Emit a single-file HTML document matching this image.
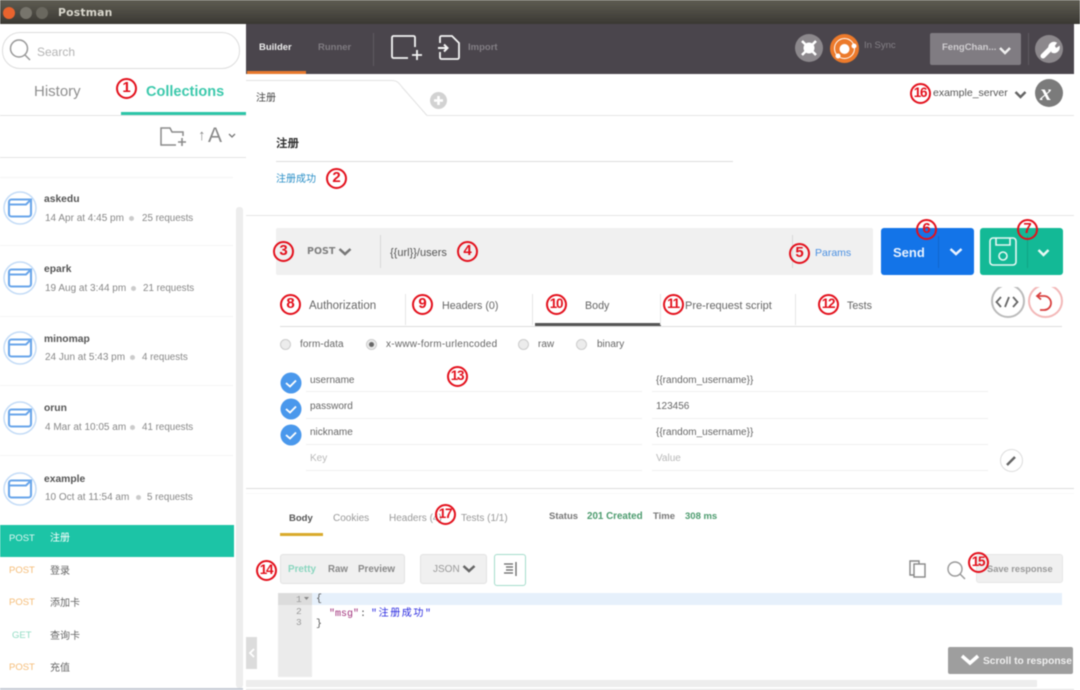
<!DOCTYPE html>
<html><head><meta charset="utf-8"><title>Postman</title>
<style>
html,body{margin:0;padding:0;background:#fff}
#r{position:relative;width:1080px;height:690px;overflow:hidden;background:#fff;font-family:"Liberation Sans","Noto Sans CJK SC",sans-serif;filter:blur(.5px)}
#r div,#r span.t{position:absolute}
.t{white-space:nowrap;line-height:14px;color:#666;font-size:11px;transform:translateY(-6px)}
.b{font-weight:bold}
.n{box-sizing:border-box;width:21px;height:21px;border:2.5px solid #e3101c;border-radius:50%;color:#e3101c;font:bold 15px/16px "Liberation Sans",sans-serif;text-align:center;background:transparent;z-index:5}
.d{font-size:13.500px;letter-spacing:-1.200px;text-indent:-1px}
.ln{background:#e6e6e6;height:1px}
svg{position:absolute;overflow:visible}
</style></head><body><div id="r">

<!-- title bar -->
<div style="left:0;top:0;width:1080px;height:23.500px;background:linear-gradient(#5e5c52,#3a3833)"></div>
<div style="left:3px;top:7px;width:12px;height:12px;border-radius:50%;background:#e8632e"></div>
<div style="left:20px;top:7px;width:12px;height:12px;border-radius:50%;background:#77756c"></div>
<div style="left:36px;top:7px;width:12px;height:12px;border-radius:50%;background:#6a685f"></div>
<span class="t b" style="left:58px;top:12px;color:#d8d6cc;font:bold 10.800px/14px 'DejaVu Sans',sans-serif;letter-spacing:.2px">Postman</span>

<!-- top bar -->
<div style="left:246px;top:23.500px;width:828px;height:50.500px;background:#4a454c"></div>
<div style="left:247px;top:71px;width:59px;height:3px;background:#e8792d"></div>
<span class="t b" style="left:259px;top:47px;color:#ececec;font-size:9.500px">Builder</span>
<span class="t b" style="left:318px;top:47px;color:#7f7b81;font-size:9.500px">Runner</span>
<div style="left:373px;top:33px;width:1px;height:33px;background:#5e5a60"></div>
<svg style="left:390px;top:34px" width="36" height="28" fill="none" stroke="#f4f4f4" stroke-width="1.800"><path d="M25 13V3.500A1.500 1.500 0 0 0 23.500 2H3.500A1.500 1.500 0 0 0 2 3.500V22.500A1.500 1.500 0 0 0 3.500 24H18"/><path d="M27 16v10M22 21h10"/></svg>
<svg style="left:436px;top:34px" width="26" height="28" fill="none" stroke="#f4f4f4" stroke-width="1.800"><path d="M4 9V3.500A1.500 1.500 0 0 1 5.500 2H16L23 9V23.500A1.500 1.500 0 0 1 21.500 25H5.500A1.500 1.500 0 0 1 4 23.500V18"/><path d="M2 14H11M8 10.500l3.500 3.500-3.500 3.500" stroke-width="2"/></svg>
<span class="t b" style="left:468px;top:47px;color:#827e84;font-size:9.500px">Import</span>

<div style="left:795px;top:34px;width:28px;height:28px;border-radius:50%;background:#8c888c"></div>
<svg style="left:795px;top:34px" width="28" height="28" fill="none" stroke="#fff"><circle cx="14" cy="14" r="5" fill="#fff"/><path d="M7 7l4 4M21 7l-4 4M7 21l4-4M21 21l-4-4" stroke-width="2.500"/></svg>
<div style="left:830px;top:34px;width:29px;height:29px;border-radius:50%;background:#ec7a2b"></div>
<svg style="left:830px;top:34px" width="29" height="29" fill="none" stroke="#fff"><circle cx="14.500" cy="14.500" r="10" stroke-width="1"/><circle cx="14.500" cy="15" r="4.500" fill="#fff"/><circle cx="24" cy="12" r="2" fill="#fff"/><circle cx="8" cy="22" r="2" fill="#fff"/></svg>
<span class="t" style="left:864px;top:45px;color:#848086;font-size:9.500px">In Sync</span>
<div style="left:930px;top:33px;width:91px;height:32px;background:#807c82;border-radius:2px"></div>
<span class="t b" style="left:942px;top:47px;color:#cfcdd0;font-size:9.500px">FengChan...</span>
<svg style="left:998px;top:46px" width="14" height="10" fill="none" stroke="#eee" stroke-width="2.500"><path d="M2 2l5 5 5-5"/></svg>
<div style="left:1028px;top:33px;width:1px;height:32px;background:#5e5a60"></div>
<div style="left:1035px;top:35px;width:28px;height:28px;border-radius:50%;background:#8c888c"></div>
<svg style="left:1035px;top:35px" width="28" height="28" fill="none" stroke="#fff" stroke-linecap="round"><path d="M8 21l7-7" stroke-width="5"/><path d="M14 13a5 5 0 0 1 7-5l-2 3 2 3 3-2a5 5 0 0 1-7 5" fill="#fff" stroke-width="1.500"/></svg>

<!-- sidebar -->
<div style="left:2px;top:32px;width:236px;height:35px;border:1px solid #ddd;border-radius:18px"></div>
<svg style="left:8px;top:38px" width="24" height="25" fill="none" stroke="#999" stroke-width="1.500"><circle cx="11" cy="10.500" r="8.500"/><path d="M17 17l5 5"/></svg>
<span class="t" style="left:37px;top:51px;color:#b4b4b4;font-size:12px">Search</span>
<span class="t" style="left:34px;top:91px;color:#8f8f8f;font-size:15px">History</span>
<span class="t b" style="left:146px;top:91px;color:#3cc9ac;font-size:14.500px">Collections</span>
<div style="left:0;top:115px;width:246px;height:1px;background:#e4e4e4"></div>
<div style="left:121px;top:112px;width:125px;height:3px;background:#2cc5a8"></div>
<svg style="left:160px;top:127px" width="28" height="20" fill="none" stroke="#8a8a8a" stroke-width="1.500"><path d="M23 9V5H12L10 1H1V18H16"/><path d="M22 11v8M18 15h8" stroke-width="1.600"/></svg>
<span class="t" style="left:198px;top:135px;color:#8a8a8a;font-size:15px">↑</span>
<span class="t" style="left:208px;top:135px;color:#888;font-size:21px">A</span>
<svg style="left:228px;top:133px" width="8" height="6" fill="none" stroke="#777" stroke-width="1.300"><path d="M1 1l3 3 3-3"/></svg>
<div style="left:0;top:157px;width:246px;height:1px;background:#e4e4e4"></div>
<div style="left:0;top:177px;width:233px;height:1px;background:#f4f4f4"></div>
<div style="left:0;top:245px;width:233px;height:1px;background:#f5f5f5"></div>
<div style="left:0;top:316px;width:233px;height:1px;background:#f5f5f5"></div>
<div style="left:0;top:385px;width:233px;height:1px;background:#f5f5f5"></div>
<div style="left:0;top:455px;width:233px;height:1px;background:#f5f5f5"></div>
<div style="left:236px;top:207px;width:7px;height:481px;background:#ededed;border-radius:3px"></div>

<svg style="left:3px;top:191px" width="34" height="34" fill="none" stroke="#6aa6ea"><circle cx="17" cy="17" r="16" stroke="#c4dcf7" stroke-width="1.500"/><path d="M6 23V11a2.500 2.500 0 0 1 2.500-2.500H28V23a2.500 2.500 0 0 1-2.500 2.500h-17A2.500 2.500 0 0 1 6 23ZM6 13.500H23L28 8.500" stroke-width="2.100"/></svg>
<span class="t b" style="left:44px;top:199px;color:#555;font-size:10.300px">askedu</span>
<span class="t" style="left:45px;top:218px;color:#888;font-size:10px">14 Apr at 4:45 pm</span>
<div style="left:129px;top:216px;width:5px;height:5px;border-radius:50%;background:#ccc"></div>
<span class="t" style="left:142px;top:218px;color:#888;font-size:9.800px">25 requests</span>

<svg style="left:3px;top:261px" width="34" height="34" fill="none" stroke="#6aa6ea"><circle cx="17" cy="17" r="16" stroke="#c4dcf7" stroke-width="1.500"/><path d="M6 23V11a2.500 2.500 0 0 1 2.500-2.500H28V23a2.500 2.500 0 0 1-2.500 2.500h-17A2.500 2.500 0 0 1 6 23ZM6 13.500H23L28 8.500" stroke-width="2.100"/></svg>
<span class="t b" style="left:44px;top:269px;color:#555;font-size:10.300px">epark</span>
<span class="t" style="left:45px;top:288px;color:#888;font-size:10px">19 Aug at 3:44 pm</span>
<div style="left:131px;top:286px;width:5px;height:5px;border-radius:50%;background:#ccc"></div>
<span class="t" style="left:143px;top:288px;color:#888;font-size:9.800px">21 requests</span>

<svg style="left:3px;top:331px" width="34" height="34" fill="none" stroke="#6aa6ea"><circle cx="17" cy="17" r="16" stroke="#c4dcf7" stroke-width="1.500"/><path d="M6 23V11a2.500 2.500 0 0 1 2.500-2.500H28V23a2.500 2.500 0 0 1-2.500 2.500h-17A2.500 2.500 0 0 1 6 23ZM6 13.500H23L28 8.500" stroke-width="2.100"/></svg>
<span class="t b" style="left:44px;top:339px;color:#555;font-size:10.300px">minomap</span>
<span class="t" style="left:45px;top:357px;color:#888;font-size:10px">24 Jun at 5:43 pm</span>
<div style="left:130px;top:355px;width:5px;height:5px;border-radius:50%;background:#ccc"></div>
<span class="t" style="left:142px;top:357px;color:#888;font-size:9.800px">4 requests</span>

<svg style="left:3px;top:401px" width="34" height="34" fill="none" stroke="#6aa6ea"><circle cx="17" cy="17" r="16" stroke="#c4dcf7" stroke-width="1.500"/><path d="M6 23V11a2.500 2.500 0 0 1 2.500-2.500H28V23a2.500 2.500 0 0 1-2.500 2.500h-17A2.500 2.500 0 0 1 6 23ZM6 13.500H23L28 8.500" stroke-width="2.100"/></svg>
<span class="t b" style="left:44px;top:408px;color:#555;font-size:10.300px">orun</span>
<span class="t" style="left:45px;top:427px;color:#888;font-size:10px">4 Mar at 10:05 am</span>
<div style="left:130px;top:425px;width:5px;height:5px;border-radius:50%;background:#ccc"></div>
<span class="t" style="left:142px;top:427px;color:#888;font-size:9.800px">41 requests</span>

<svg style="left:3px;top:472px" width="34" height="34" fill="none" stroke="#6aa6ea"><circle cx="17" cy="17" r="16" stroke="#c4dcf7" stroke-width="1.500"/><path d="M6 23V11a2.500 2.500 0 0 1 2.500-2.500H28V23a2.500 2.500 0 0 1-2.500 2.500h-17A2.500 2.500 0 0 1 6 23ZM6 13.500H23L28 8.500" stroke-width="2.100"/></svg>
<span class="t b" style="left:44px;top:479px;color:#555;font-size:10.300px">example</span>
<span class="t" style="left:45px;top:497px;color:#888;font-size:10px">10 Oct at 11:54 am</span>
<div style="left:136px;top:495px;width:5px;height:5px;border-radius:50%;background:#ccc"></div>
<span class="t" style="left:147px;top:497px;color:#888;font-size:9.800px">5 requests</span>

<div style="left:0;top:525px;width:234px;height:32px;background:#1cc4a6"></div>
<span class="t" style="left:9px;top:538px;color:#dff7f1;font-size:9.500px">POST</span>
<span class="t" style="left:50px;top:538px;color:#fff;font-size:10px">注册</span>
<span class="t" style="left:9px;top:570px;color:#f5bc76;font-size:9.500px">POST</span>
<span class="t" style="left:50px;top:571px;color:#666;font-size:10px">登录</span>
<span class="t" style="left:9px;top:602px;color:#f5bc76;font-size:9.500px">POST</span>
<span class="t" style="left:50px;top:603px;color:#666;font-size:10px">添加卡</span>
<span class="t" style="left:12px;top:635px;color:#92dcc4;font-size:9.500px">GET</span>
<span class="t" style="left:50px;top:636px;color:#666;font-size:10px">查询卡</span>
<span class="t" style="left:9px;top:667px;color:#f5bc76;font-size:9.500px">POST</span>
<span class="t" style="left:50px;top:668px;color:#666;font-size:10px">充值</span>
<div style="left:0;top:688px;width:243px;height:2px;background:#c6ccd6"></div>

<!-- tab bar -->
<div class="ln" style="left:427px;top:115px;width:647px"></div>
<svg style="left:246px;top:80px" width="182" height="36" fill="none" stroke="#e2e2e2"><path d="M0 .5H146C151 .5 153 3 156 7L181 35.500"/></svg>
<span class="t" style="left:256px;top:98px;color:#444;font-size:10px">注册</span>
<div style="left:430px;top:92px;width:17px;height:17px;border-radius:50%;background:#d2d2d2"></div>
<svg style="left:430px;top:92px" width="17" height="17" stroke="#fff" stroke-width="2.500"><path d="M8.500 4v9M4 8.500h9"/></svg>
<span class="t" style="left:933px;top:92px;color:#555;font-size:10.500px">example_server</span>
<svg style="left:1014px;top:90px" width="14" height="10" fill="none" stroke="#666" stroke-width="2.500"><path d="M1.500 2l5 5 5-5"/></svg>
<div style="left:1035px;top:79px;width:28px;height:28px;border-radius:50%;background:#7b7b7b"></div>
<span class="t b" style="left:1040px;top:92px;color:#fff;font:italic bold 23px/14px 'Liberation Serif',serif">x</span>

<span class="t b" style="left:276px;top:143px;color:#333;font-size:11.500px">注册</span>
<div class="ln" style="left:276px;top:161px;width:457px;background:#ddd"></div>
<span class="t" style="left:276px;top:179px;color:#2a8fc7;font-size:10px">注册成功</span>
<div class="ln" style="left:246px;top:215px;width:828px"></div>

<!-- url bar -->
<div style="left:276px;top:228px;width:597px;height:47px;background:#f0f0f0;border-radius:2px"></div>
<span class="t b" style="left:307px;top:251px;color:#808080;font:bold 9.500px/14px 'DejaVu Sans',sans-serif">POST</span>
<svg style="left:338px;top:247px" width="14" height="10" fill="none" stroke="#777" stroke-width="2.500"><path d="M1.500 2l5.500 5 5.500-5"/></svg>
<div style="left:380px;top:235px;width:1px;height:33px;background:#d8d8d8"></div>
<span class="t" style="left:390px;top:252px;color:#555;font-size:11px">{{url}}/users</span>
<div style="left:792px;top:235px;width:1px;height:33px;background:#d8d8d8"></div>
<span class="t" style="left:815px;top:252px;color:#4a90e2;font-size:10.500px">Params</span>

<div style="left:881px;top:228px;width:93px;height:47px;background:#1374e8;border-radius:3px"></div>
<div style="left:938px;top:236px;width:1px;height:32px;background:#1266cc"></div>
<span class="t b" style="left:893px;top:252px;color:#e8f2ff;font-size:13px">Send</span>
<svg style="left:949px;top:247px" width="14" height="10" fill="none" stroke="#e8f2ff" stroke-width="2.500"><path d="M1.500 2l5.500 5 5.500-5"/></svg>
<div style="left:980px;top:228px;width:83px;height:47px;background:#13b996;border-radius:3px"></div>
<div style="left:1027px;top:236px;width:1px;height:32px;background:#10a585"></div>
<svg style="left:989px;top:237px" width="30" height="30" fill="none" stroke="#e6f8f3" stroke-width="1.600"><rect x="1" y="1" width="26" height="27" rx="3"/><path d="M7 1v7h14V1"/><circle cx="14" cy="19" r="4"/></svg>
<svg style="left:1037px;top:248px" width="14" height="10" fill="none" stroke="#e6f8f3" stroke-width="2.500"><path d="M1.500 2l5 5 5-5"/></svg>

<!-- req tabs -->
<div class="ln" style="left:280px;top:326px;width:782px;height:1px;background:#ddd"></div>
<span class="t" style="left:309px;top:305px;color:#666;font-size:11.500px">Authorization</span>
<div class="ln" style="left:405px;top:294px;width:1px;height:31px"></div>
<span class="t" style="left:442px;top:305px;color:#666;font-size:10.700px">Headers (0)</span>
<div class="ln" style="left:532px;top:294px;width:1px;height:31px"></div>
<span class="t" style="left:585px;top:305px;color:#666;font-size:10.700px">Body</span>
<div style="left:535px;top:323px;width:126px;height:3px;background:#555"></div>
<div class="ln" style="left:660px;top:294px;width:1px;height:31px"></div>
<span class="t" style="left:685px;top:305px;color:#666;font-size:11px">Pre-request script</span>
<div class="ln" style="left:795px;top:294px;width:1px;height:31px"></div>
<span class="t" style="left:847px;top:305px;color:#666;font-size:10.700px">Tests</span>
<div style="left:991px;top:284px;width:30px;height:30px;border:2px solid #bbb;border-radius:50%;clip-path:inset(3px 0 0 0)"></div>
<svg style="left:995px;top:295px" width="24" height="14" fill="none" stroke="#666" stroke-width="1.800"><path d="M6 2L1.500 7 6 12M18 2l4.500 5L18 12M14 2l-4 10"/></svg>
<div style="left:1028px;top:284px;width:31px;height:30px;border:2px solid #f3b8b8;border-radius:50%;clip-path:inset(3px 0 0 0)"></div>
<svg style="left:1034px;top:292px" width="22" height="20" fill="none" stroke="#d9403f" stroke-width="1.800"><path d="M4 4h6.500a7 7 0 1 1-1 14H6"/><path d="M7 0.500L3 4l4 3.500"/></svg>

<!-- radios -->
<div style="left:280px;top:339px;width:9px;height:9px;border:1px solid #ccc;border-radius:50%;background:#ececec"></div>
<span class="t" style="left:300px;top:344px;color:#666;font-size:10px;letter-spacing:.1px">form-data</span>
<div style="left:366px;top:339px;width:9px;height:9px;border:1px solid #ccc;border-radius:50%;background:radial-gradient(#666 0 2px,#ececec 3px)"></div>
<span class="t" style="left:386px;top:344px;color:#666;font-size:10px;letter-spacing:.25px">x-www-form-urlencoded</span>
<div style="left:518px;top:339px;width:9px;height:9px;border:1px solid #ccc;border-radius:50%;background:#ececec"></div>
<span class="t" style="left:538px;top:344px;color:#666;font-size:10px">raw</span>
<div style="left:576px;top:339px;width:9px;height:9px;border:1px solid #ccc;border-radius:50%;background:#ececec"></div>
<span class="t" style="left:597px;top:344px;color:#666;font-size:10px">binary</span>

<!-- form rows -->
<svg style="left:280px;top:372px" width="22" height="22"><circle cx="11" cy="11" r="10.500" fill="#4a98ec"/><path d="M6 11l4 3.500 6-6" fill="none" stroke="#fff" stroke-width="1.800"/></svg>
<svg style="left:280px;top:398px" width="22" height="22"><circle cx="11" cy="11" r="10.500" fill="#4a98ec"/><path d="M6 11l4 3.500 6-6" fill="none" stroke="#fff" stroke-width="1.800"/></svg>
<svg style="left:280px;top:424px" width="22" height="22"><circle cx="11" cy="11" r="10.500" fill="#4a98ec"/><path d="M6 11l4 3.500 6-6" fill="none" stroke="#fff" stroke-width="1.800"/></svg>
<span class="t" style="left:310px;top:380px;color:#666;font-size:10px">username</span>
<span class="t" style="left:310px;top:406px;color:#666;font-size:10px">password</span>
<span class="t" style="left:310px;top:432px;color:#666;font-size:10px">nickname</span>
<span class="t" style="left:310px;top:458px;color:#b8b8b8;font-size:10px">Key</span>
<span class="t" style="left:656px;top:380px;color:#666;font-size:10px">{{random_username}}</span>
<span class="t" style="left:656px;top:406px;color:#666;font-size:10px">123456</span>
<span class="t" style="left:656px;top:432px;color:#666;font-size:10px">{{random_username}}</span>
<span class="t" style="left:656px;top:458px;color:#b8b8b8;font-size:10px">Value</span>
<div class="ln" style="left:306px;top:391px;width:336px;background:#f0f0f0"></div>
<div class="ln" style="left:306px;top:418px;width:336px;background:#f0f0f0"></div>
<div class="ln" style="left:306px;top:444px;width:336px;background:#f0f0f0"></div>
<div class="ln" style="left:306px;top:470px;width:336px;background:#f0f0f0"></div>
<div class="ln" style="left:652px;top:391px;width:336px;background:#f0f0f0"></div>
<div class="ln" style="left:652px;top:418px;width:336px;background:#f0f0f0"></div>
<div class="ln" style="left:652px;top:444px;width:336px;background:#f0f0f0"></div>
<div class="ln" style="left:652px;top:470px;width:336px;background:#f0f0f0"></div>
<div style="left:1000px;top:449px;width:21px;height:21px;border:1px solid #ddd;border-radius:50%"></div>
<svg style="left:1000px;top:449px" width="23" height="23" fill="none" stroke="#666" stroke-width="2.500"><path d="M7 16l8-8"/></svg>
<div class="ln" style="left:246px;top:488px;width:828px;background:#ddd"></div>
<div class="ln" style="left:246px;top:493px;width:828px;background:#f8f8f8"></div>

<!-- response -->
<span class="t b" style="left:289px;top:518px;color:#555;font-size:9.500px">Body</span>
<span class="t" style="left:333px;top:518px;color:#999;font-size:10px">Cookies</span>
<span class="t" style="left:389px;top:518px;color:#999;font-size:10px">Headers (4)</span>
<span class="t" style="left:461px;top:518px;color:#999;font-size:10px">Tests (1/1)</span>
<div style="left:280px;top:533px;width:43px;height:3px;background:#d9aa2c"></div>
<span class="t b" style="left:549px;top:516px;color:#777;font-size:9.500px">Status</span>
<span class="t b" style="left:587px;top:516px;color:#4c9b6e;font-size:9.800px">201 Created</span>
<span class="t b" style="left:653px;top:516px;color:#777;font-size:9.500px">Time</span>
<span class="t b" style="left:685px;top:516px;color:#4c9b6e;font-size:9.500px">308 ms</span>

<div style="left:280px;top:554px;width:123px;height:28px;background:#f0f0f0;border:1px solid #e2e2e2;border-radius:3px"></div>
<span class="t b" style="left:288px;top:569px;color:#8ad6bf;font-size:9.900px">Pretty</span>
<span class="t b" style="left:328px;top:569px;color:#888;font-size:9.700px">Raw</span>
<span class="t b" style="left:358px;top:569px;color:#888;font-size:9.800px">Preview</span>
<div style="left:420px;top:554px;width:65px;height:28px;background:#f0f0f0;border:1px solid #e2e2e2;border-radius:3px"></div>
<span class="t" style="left:433px;top:569px;color:#999;font-size:10px">JSON</span>
<svg style="left:462px;top:564px" width="14" height="10" fill="none" stroke="#666" stroke-width="2.500"><path d="M1.500 2l5.500 5 5.500-5"/></svg>
<div style="left:494px;top:554px;width:30px;height:30px;border:1px solid #a4dccb;border-radius:3px"></div>
<svg style="left:503px;top:561px" width="15" height="16" fill="none" stroke="#666" stroke-width="1.300"><path d="M1 3h9M3 6h7M3 9h7M1 12h9M13 1v14"/></svg>
<svg style="left:909px;top:560px" width="18" height="18" fill="none" stroke="#888" stroke-width="1.400"><path d="M5 15H1V1h9v3"/><rect x="5" y="4" width="11" height="13"/></svg>
<svg style="left:946px;top:560px" width="20" height="20" fill="none" stroke="#999" stroke-width="1.400"><circle cx="9" cy="9" r="7"/><path d="M14 14l5 5"/></svg>
<div style="left:976px;top:554px;width:85px;height:27px;background:#f0f0f0;border:1px solid #e6e6e6;border-radius:3px"></div>
<span class="t b" style="left:987px;top:568px;color:#999;font-size:9.300px">Save response</span>

<!-- editor -->
<div style="left:278px;top:593px;width:34px;height:84px;background:#ebebeb"></div>
<div style="left:278px;top:593px;width:34px;height:12px;background:#dcdcdc"></div>
<div style="left:312px;top:593px;width:750px;height:12px;background:#e6f0fb"></div>
<span class="t" style="left:296px;top:599px;color:#999;font:9.500px/14px 'Liberation Mono',monospace">1</span>
<svg style="left:304px;top:597px" width="6" height="4"><path d="M0 0h5L2.500 3z" fill="#888"/></svg>
<span class="t" style="left:296px;top:611px;color:#999;font:9.500px/14px 'Liberation Mono',monospace">2</span>
<span class="t" style="left:296px;top:622px;color:#999;font:9.500px/14px 'Liberation Mono',monospace">3</span>
<span class="t" style="left:316px;top:599px;color:#555;font:10px/14px 'Liberation Mono',monospace">{</span>
<span class="t" style="left:329px;top:614px;color:#a0307a;font:10px/14px 'Liberation Mono',monospace">"msg"</span>
<span class="t" style="left:360px;top:614px;color:#555;font:10px/14px 'Liberation Mono',monospace">:</span>
<span class="t" style="left:371px;top:614px;color:#2a2ae0;font:10px/14px 'Liberation Mono','Noto Sans CJK SC',monospace;letter-spacing:1.600px">"注册成功"</span>
<span class="t" style="left:316px;top:624px;color:#555;font:10px/14px 'Liberation Mono',monospace">}</span>

<div style="left:246px;top:637px;width:11px;height:32px;background:#dcdcdc"></div>
<svg style="left:249px;top:648px" width="6" height="10" fill="none" stroke="#fff" stroke-width="1.800"><path d="M5 1L1 5l4 4"/></svg>
<div style="left:948px;top:647px;width:125px;height:27px;background:#9e9e9e;border-radius:2px"></div>
<svg style="left:960px;top:654px" width="20" height="13" fill="none" stroke="#fff" stroke-width="3.500"><path d="M2 2l8 7 8-7"/></svg>
<span class="t b" style="left:983px;top:661px;color:#eee;font-size:10.200px">Scroll to response</span>
<div style="left:246px;top:680px;width:791px;height:7px;background:#ededed"></div>
<div style="left:246px;top:689px;width:828px;height:1px;background:#e0e0e0"></div>

<!-- numbered badges -->
<div class="n" style="left:116px;top:78px">1</div>
<div class="n" style="left:326px;top:168px">2</div>
<div class="n" style="left:273px;top:241px">3</div>
<div class="n" style="left:457px;top:241px">4</div>
<div class="n" style="left:789px;top:243px">5</div>
<div class="n" style="left:916px;top:219px">6</div>
<div class="n" style="left:1017px;top:219px">7</div>
<div class="n" style="left:280px;top:294px">8</div>
<div class="n" style="left:412px;top:294px">9</div>
<div class="n d" style="left:546px;top:294px">10</div>
<div class="n d" style="left:663px;top:294px">11</div>
<div class="n d" style="left:818px;top:294px">12</div>
<div class="n d" style="left:447px;top:366px">13</div>
<div class="n d" style="left:256px;top:560px">14</div>
<div class="n d" style="left:968px;top:552px">15</div>
<div class="n d" style="left:910px;top:83px">16</div>
<div class="n d" style="left:435px;top:504px">17</div>
</div></body></html>
